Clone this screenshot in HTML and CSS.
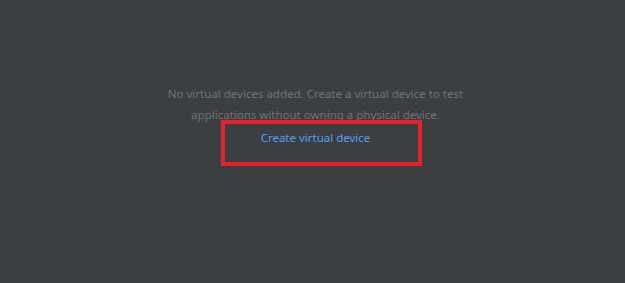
FILE: index.html
```html
<!DOCTYPE html>
<html>
<head>
    <title>Virtual Devices</title>
    <link rel="stylesheet" href="styles.css">
</head>
<body>
    <div class="empty">
        <p class="message">No virtual devices added. Create a virtual device to test<br>applications without owning a physical device.</p>
        <a href="#" class="createLink">Create virtual device</a>
        <div class="highlight"></div>
    </div>
</body>
</html>
```

FILE: styles.css
```css
body {
    margin: 0;
    background-color: #3c3f41;
    font-family: 'Noto Sans', sans-serif;
    height: 283px;
}
.empty {
    position: relative;
    width: 631px;
    padding-top: 83px;
    text-align: center;
}
.message {
    margin: 0;
    font-size: 11.5px;
    line-height: 21px;
    color: #717274;
}
.createLink {
    display: inline-block;
    margin-top: 2px;
    font-size: 11.5px;
    line-height: 20px;
    color: #589df6;
    text-decoration: none;
}
/* red annotation box drawn over the link */
.highlight {
    position: absolute;
    left: 221px;
    top: 120px;
    width: 193px;
    height: 38px;
    border: 4px solid #e8212b;
}
```
